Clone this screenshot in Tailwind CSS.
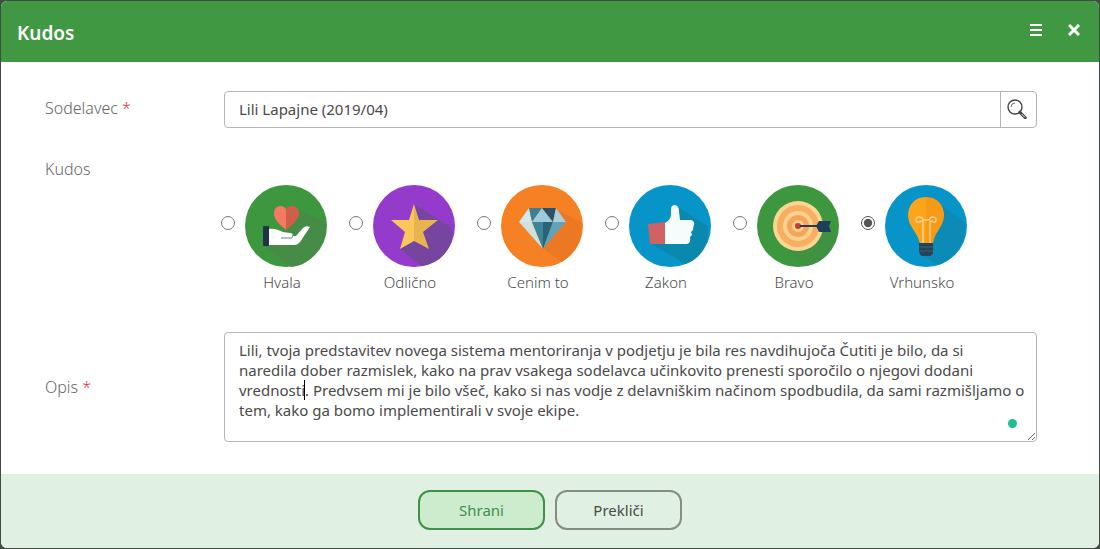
<!DOCTYPE html>
<html lang="sl">
<head>
    <meta charset="UTF-8">
    <meta name="viewport" content="width=device-width, initial-scale=1.0">
    <title>Kudos</title>
    <script src="https://cdn.jsdelivr.net/npm/@tailwindcss/browser@4"></script>
</head>
<body class="min-h-screen flex flex-col bg-[#434b45] p-px font-['Noto_Sans',sans-serif] text-[#4a4a4a]">
    <form class="flex-1 flex flex-col rounded-md overflow-hidden bg-white">
        <header class="flex items-center justify-between bg-[#409843] text-white h-[61px] pl-4 pr-[19px]">
            <h1 class="text-[19px] font-semibold pt-1">Kudos</h1>
            <div class="flex items-center gap-[26px] pb-1">
                <button type="button" aria-label="Meni">
                    <svg class="w-3 h-3" viewBox="0 0 12 12" fill="none" stroke="currentColor" stroke-width="2"><path d="M0 1h12M0 6h12M0 11h12"/></svg>
                </button>
                <button type="button" aria-label="Zapri">
                    <svg class="w-3 h-3" viewBox="0 0 12 12" fill="none" stroke="currentColor" stroke-width="3"><path d="M1 1l10 10M11 1L1 11"/></svg>
                </button>
            </div>
        </header>

        <main class="flex flex-col gap-[29px] pt-[29px] pb-8 pl-11 pr-[62px]">
            <div class="flex items-start">
                <label for="coworker" class="w-[179px] pt-[5px] shrink-0 font-light text-[#666]">Sodelavec <span class="text-[#dc3545]">*</span></label>
                <div class="flex flex-1 h-[37px] border border-[#b5b5b5] rounded">
                    <input id="coworker" type="text" value="Lili Lapajne (2019/04)" class="flex-1 min-w-0 px-3.5 text-[15px] outline-none">
                    <button type="button" aria-label="Išči" class="w-9 pr-1 pb-0.5 border-l border-[#b5b5b5] flex items-center justify-center">
                        <svg class="w-5 h-5" viewBox="0 0 20 20" fill="none" stroke="#444">
                            <circle cx="8" cy="8" r="7" stroke-width="1.4"/>
                            <path d="M4 8a4 4 0 0 1 4-4" stroke="#777"/>
                            <path d="M12.800 13.200L18.300 18.700" stroke-width="3" stroke-linecap="round"/>
                            <path d="M14.500 14.900L18 18.400" stroke="#ddd"/>
                        </svg>
                    </button>
                </div>
            </div>

            <fieldset class="flex items-start pb-2.5">
                <legend class="float-left w-[179px] shrink-0 font-light text-[#666]">Kudos</legend>
                <div class="flex flex-wrap gap-[22px] pt-7 -ml-[3px] text-[15px] leading-5 font-light">
                    <label class="flex items-start gap-2.5">
                        <input type="radio" name="kudos" class="size-3.5 mt-[31px] accent-[#555]">
                        <span class="flex flex-col gap-[5px] pb-px">
                            <svg class="w-[82px] h-[82px]" viewBox="0 0 82 82">
                                <circle cx="41" cy="41" r="41" fill="#3c973f"/>
                                <path d="M53 24L80 38C83 60 65 81 46 82L19 61L40 44Z" fill="#468c46"/>
                                <path d="M41 45C35 40 29 35 29 28C29 20 38 19 41 24Z" fill="#f47a60"/>
                                <path d="M41 45C47 40 54 35 54 28C54 20 44 19 41 24Z" fill="#cf5f48"/>
                                <rect x="18" y="41" width="6" height="20" rx="1" fill="#203448"/>
                                <path d="M24 44C29 43 33 45 38 47L45 48Q48 48 48 51L51 51L58 43Q61 40 65 42L55 57Q53 60 50 60H24Z" fill="#fff"/>
                                <path d="M36 53H46Q48 53 48 50" fill="none" stroke="#5a8a8a" stroke-width="1"/>
                            </svg>
                            <span class="text-center pr-2">Hvala</span>
                        </span>
                    </label>
                    <label class="flex items-start gap-2.5">
                        <input type="radio" name="kudos" class="size-3.5 mt-[31px] accent-[#555]">
                        <span class="flex flex-col gap-[5px] pb-px">
                            <svg class="w-[82px] h-[82px]" viewBox="0 0 82 82">
                                <circle cx="41" cy="41" r="41" fill="#943bcb"/>
                                <path d="M41 19L79 43V56Q70 79 48 81L27 64L45 42Z" fill="#75459f"/>
                                <path d="M41 19L36 35H18L32 47L27 64L41 56Z" fill="#fbc75b"/>
                                <path d="M41 19L46 35H65L50 47L56 64L41 56Z" fill="#e9b350"/>
                            </svg>
                            <span class="text-center pr-2">Odlično</span>
                        </span>
                    </label>
                    <label class="flex items-start gap-2.5">
                        <input type="radio" name="kudos" class="size-3.5 mt-[31px] accent-[#555]">
                        <span class="flex flex-col gap-[5px] pb-px">
                            <svg class="w-[82px] h-[82px]" viewBox="0 0 82 82">
                                <circle cx="41" cy="41" r="41" fill="#f58124"/>
                                <path d="M55 24L81 38Q82 62 61 77L42 63Z" fill="#ec7824"/>
                                <path d="M28 23L18 37H31Z" fill="#d4e7ed"/>
                                <path d="M28 23H41L31 37Z" fill="#3f7f91"/>
                                <path d="M41 23L31 37H52Z" fill="#9dcbdc"/>
                                <path d="M41 23H55L52 37Z" fill="#2b526b"/>
                                <path d="M55 23L52 37H65Z" fill="#a9cfdd"/>
                                <path d="M18 37H31L42 64Z" fill="#cfe0dd"/>
                                <path d="M31 37H42V64Z" fill="#3e8496"/>
                                <path d="M42 37H52L42 64Z" fill="#286479"/>
                                <path d="M52 37H65L42 64Z" fill="#65a2b3"/>
                            </svg>
                            <span class="text-center pr-2">Cenim to</span>
                        </span>
                    </label>
                    <label class="flex items-start gap-2.5">
                        <input type="radio" name="kudos" class="size-3.5 mt-[31px] accent-[#555]">
                        <span class="flex flex-col gap-[5px] pb-px">
                            <svg class="w-[82px] h-[82px]" viewBox="0 0 82 82">
                                <circle cx="41" cy="41" r="41" fill="#0795c9"/>
                                <path d="M50 23L79 41Q80 70 57 79L22 59L45 40Z" fill="#0b88ae"/>
                                <path d="M19 39L36 37V59L21 59Z" fill="#d06264"/>
                                <path d="M36 38Q42 35 42 29V23Q43 20 46 20Q50 21 50 26L51 35H62Q66 36 65 40Q64 42 64 45L62 47L63 50L61 52Q62 58 58 59H36Z" fill="#f6fcfc"/>
                            </svg>
                            <span class="text-center pr-2">Zakon</span>
                        </span>
                    </label>
                    <label class="flex items-start gap-2.5">
                        <input type="radio" name="kudos" class="size-3.5 mt-[31px] accent-[#555]">
                        <span class="flex flex-col gap-[5px] pb-px">
                            <svg class="w-[82px] h-[82px]" viewBox="0 0 82 82">
                                <circle cx="41" cy="41" r="41" fill="#3c973f"/>
                                <path d="M66 39L73 47L79 53Q73 76 50 81L26 60L41 41Z" fill="#419143"/>
                                <circle cx="41" cy="41" r="25" fill="#fbd693"/>
                                <circle cx="41" cy="41" r="21" fill="#f8ae62"/>
                                <circle cx="41" cy="41" r="15" fill="#fbd18e"/>
                                <circle cx="41" cy="41" r="11" fill="#f5a45c"/>
                                <circle cx="41" cy="41" r="6" fill="#fbcf8d"/>
                                <circle cx="41" cy="41" r="3" fill="#c93a36"/>
                                <path d="M43 41H71" stroke="#263b59" stroke-width="2"/>
                                <path d="M59 41L62 36H74L72 41L74 47H62Z" fill="#1e4056"/>
                            </svg>
                            <span class="text-center pr-2">Bravo</span>
                        </span>
                    </label>
                    <label class="flex items-start gap-2.5">
                        <input type="radio" name="kudos" checked class="size-3.5 mt-[31px] accent-[#555]">
                        <span class="flex flex-col gap-[5px] pb-px">
                            <svg class="w-[82px] h-[82px]" viewBox="0 0 82 82">
                                <circle cx="41" cy="41" r="41" fill="#0795c9"/>
                                <path d="M55 19L80 37Q82 68 53 80L35 69L42 50Z" fill="#0b8bb6"/>
                                <path d="M41 12C29 12 23 21 23 30C23 42 33 47 35 59H41Z" fill="#fda51a"/>
                                <path d="M41 12C53 12 59 21 59 30C59 42 49 47 48 59H41Z" fill="#f89a15"/>
                                <path d="M38 58V37Q38 35 34 37Q31 38 31 35Q31 32 34 32Q38 32 38 35H44Q45 32 48 32Q51 32 51 35Q51 38 48 37Q45 35 45 37V58" fill="none" stroke="#fbd59b" stroke-width="1.300"/>
                                <path d="M34 58H48V67Q48 70 45 71H37Q35 70 34 67Z" fill="#24445a"/>
                                <path d="M34 62H48M34 66H48" stroke="#3c6072"/>
                            </svg>
                            <span class="text-center pr-2">Vrhunsko</span>
                        </span>
                    </label>
                </div>
            </fieldset>

            <div class="flex items-center">
                <label for="description" class="w-[179px] shrink-0 font-light text-[#666]">Opis <span class="text-[#dc3545]">*</span></label>
                <div class="relative flex flex-1">
                    <textarea id="description" class="flex-1 h-[110px] border border-[#b5b5b5] rounded pl-3.5 pr-2.5 py-[7px] text-[15px] leading-5 outline-none resize">Lili, tvoja predstavitev novega sistema mentoriranja v podjetju je bila res navdihujoča Čutiti je bilo, da si
naredila dober razmislek, kako na prav vsakega sodelavca učinkovito prenesti sporočilo o njegovi dodani vrednosti. Predvsem mi je bilo všeč, kako si nas vodje z delavniškim načinom spodbudila, da sami razmišljamo o tem, kako ga bomo implementirali v svoje ekipe.</textarea>
                    <!-- text cursor and spell check status -->
                    <span class="absolute left-20 top-12 w-px h-5 bg-black"></span>
                    <span class="absolute right-5 bottom-3.5 size-[9px] rounded-full bg-[#1fbd90]"></span>
                </div>
            </div>
        </main>

        <footer class="flex-1 flex items-start justify-center gap-2.5 py-4 bg-[#e0f0e2] text-[15px]">
            <button type="submit" class="w-[127px] h-10 border-2 border-[#409048] rounded-xl bg-[#cdecce] text-[#40904a]">Shrani</button>
            <button type="button" class="w-[127px] h-10 border-2 border-[#858d85] rounded-xl">Prekliči</button>
        </footer>
    </form>
</body>
</html>
